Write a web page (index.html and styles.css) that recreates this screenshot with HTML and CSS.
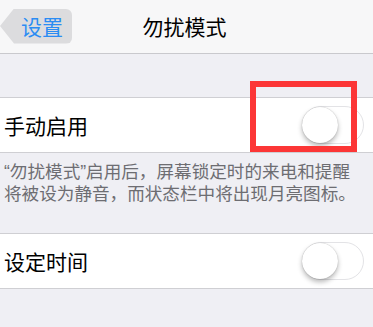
FILE: index.html
```html
<!DOCTYPE html>
<html lang="zh-CN">
<head>
<meta charset="utf-8">
<title>勿扰模式</title>
<link rel="stylesheet" href="styles.css">
</head>
<body>
<div class="screen">
  <header class="nav">
    <a class="back">设置</a>
    <h1 class="title">勿扰模式</h1>
    <span class="spacer"></span>
  </header>
  <div class="gap-top"></div>
  <section class="group">
    <div class="row">
      <span class="label">手动启用</span>
      <span class="switch"><span class="knob"></span></span>
    </div>
  </section>
  <p class="note">“勿扰模式”启用后，屏幕锁定时的来电和提醒<br>将被设为静音，而状态栏中将出现月亮图标。</p>
  <section class="group">
    <div class="row">
      <span class="label">设定时间</span>
      <span class="switch"><span class="knob"></span></span>
    </div>
  </section>
  <div class="highlight"></div>
</div>
</body>
</html>
```

FILE: styles.css
```css
* { box-sizing: border-box; }
html, body { margin: 0; padding: 0; }
body {
  background: #efeff4;
  font-family: "Liberation Sans", "Noto Sans CJK SC", sans-serif;
  color: #000;
}
.screen {
  position: relative;
  width: 373px;
  height: 327px;
  overflow: hidden;
  background: #efeff4;
}
.nav {
  height: 54px;
  background: #f7f7f8;
  border-bottom: 1px solid #c9c9cd;
  display: grid;
  grid-template-columns: 1fr auto 1fr;
  align-items: center;
}
.back {
  justify-self: start;
  height: 35px;
  width: 72px;
  margin-top: -1px;
  padding-left: 21px;
  display: flex;
  align-items: center;
  background: #dcdcde;
  color: #2b8cf3;
  font-size: 21px;
  border-radius: 0 6px 6px 0;
  clip-path: polygon(14px 0, 100% 0, 100% 100%, 14px 100%, 0 50%);
}
.title {
  margin: 0;
  font-size: 21px;
  font-weight: normal;
  padding-right: 4px;
  margin-top: -1px;
}
.gap-top { height: 43px; }
.group {
  background: #fff;
  border-top: 1px solid #cfcfd3;
  border-bottom: 1px solid #cfcfd3;
}
.row {
  height: 54px;
  display: flex;
  align-items: center;
  justify-content: space-between;
  padding: 0 9px 0 4px;
}
.label { font-size: 21px; }
.switch {
  width: 62px;
  height: 38px;
  border-radius: 19px;
  border: 1.5px solid #e3e3e6;
  background: #fff;
  display: flex;
  align-items: center;
}
.knob {
  width: 36px;
  height: 36px;
  border-radius: 50%;
  background: #fff;
  margin-left: -1px;
  box-shadow: 0 3px 5px rgba(0,0,0,0.28), 0 0 1px rgba(0,0,0,0.3);
}
.note {
  margin: 0;
  height: 80px;
  padding: 8px 0 0 4px;
  font-size: 17.6px;
  line-height: 22px;
  color: #6d6d72;
}
.highlight {
  position: absolute;
  left: 250px;
  top: 81px;
  width: 107px;
  height: 71px;
  border: 6px solid #fc3636;
}
```
